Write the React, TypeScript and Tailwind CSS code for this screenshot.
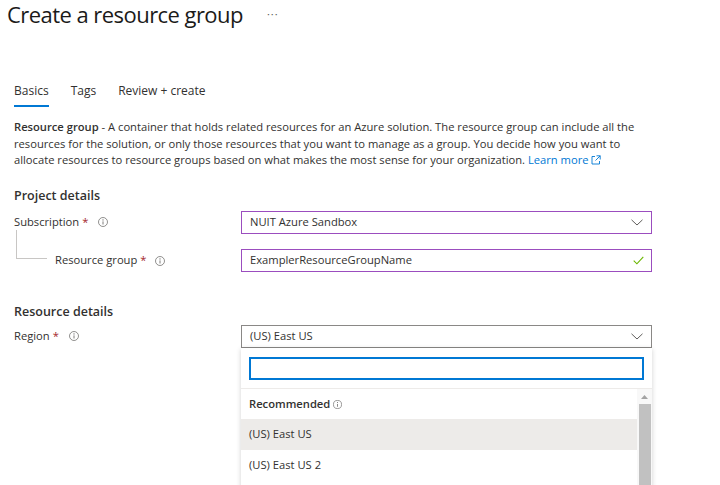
import React from "react";

function InfoIcon({ size = 10 }: { size?: number }) {
  return (
    <svg width={size} height={size} viewBox="0 0 16 16" fill="none" className="shrink-0">
      <circle cx="8" cy="8" r="7.2" stroke="#605e5c" strokeWidth="1.1" />
      <line x1="8" y1="7" x2="8" y2="12" stroke="#605e5c" strokeWidth="1.3" />
      <circle cx="8" cy="4.6" r="0.9" fill="#605e5c" />
    </svg>
  );
}

function Chevron() {
  return (
    <svg width="12" height="7" viewBox="0 0 12 7" fill="none" className="shrink-0">
      <path d="M0.5 0.8 L6 6 L11.5 0.8" stroke="#605e5c" strokeWidth="1" />
    </svg>
  );
}

function Check() {
  return (
    <svg width="11" height="9" viewBox="0 0 11 9" fill="none" className="shrink-0">
      <path d="M0.7 4.6 L3.9 7.8 L10.3 0.8" stroke="#6bb700" strokeWidth="1.1" />
    </svg>
  );
}

function ExternalIcon() {
  return (
    <svg width="10" height="10" viewBox="0 0 10 10" fill="none" className="inline-block ml-[2px] -mt-[3px]">
      <path d="M4 1.5 H1 V9 H8.5 V6" stroke="#0078d4" strokeWidth="0.9" />
      <path d="M5.5 0.8 H9.2 V4.5 M9.2 0.8 L4.5 5.5" stroke="#0078d4" strokeWidth="0.9" />
    </svg>
  );
}

function Req() {
  return <span className="text-[#a4262c] ml-[3px]">*</span>;
}

export default function App() {
  return (
    <div className="w-[720px] h-[485px] overflow-hidden bg-white font-['Open_Sans',sans-serif] text-[#323130] flex flex-col">
      {/* Title */}
      <div className="h-[27px] flex items-center pl-[7px] shrink-0">
        <h1 className="text-[22px] font-medium tracking-[-0.55px] text-[#1b1a19] leading-none whitespace-nowrap">
          Create a resource group
        </h1>
        <span className="ml-[24px] text-[11px] text-[#605e5c] tracking-[1px] leading-none">···</span>
      </div>

      {/* Tabs */}
      <div className="mt-[50px] flex pl-[14px] gap-[22px] shrink-0">
        <div className="flex flex-col">
          <div className="h-[28px] flex items-center text-[12px] text-[#323130]">Basics</div>
          <div className="h-[2px] bg-[#0078d4]" />
        </div>
        <div className="flex flex-col">
          <div className="h-[28px] flex items-center text-[12px] text-[#323130]">Tags</div>
          <div className="h-[2px]" />
        </div>
        <div className="flex flex-col">
          <div className="h-[28px] flex items-center text-[12px] text-[#323130]">Review + create</div>
          <div className="h-[2px]" />
        </div>
      </div>

      {/* Description */}
      <p className="mt-[12px] pl-[14px] text-[11.2px] leading-[16.5px] whitespace-nowrap shrink-0">
        <span className="font-semibold">Resource group</span> - A container that holds related resources for an Azure
        solution. The resource group can include all the
        <br />
        resources for the solution, or only those resources that you want to manage as a group. You decide how you
        want to
        <br />
        allocate resources to resource groups based on what makes the most sense for your organization.{" "}
        <span className="text-[#0078d4]">
          Learn more
          <ExternalIcon />
        </span>
      </p>

      {/* Project details */}
      <div className="mt-[18px] h-[20px] flex items-center pl-[14px] text-[12.5px] font-semibold shrink-0">
        Project details
      </div>

      {/* Subscription */}
      <div className="mt-[4.5px] h-[23px] flex items-center shrink-0">
        <div className="w-[241px] pl-[14px] flex items-center text-[11.2px]">
          <span>Subscription</span>
          <Req />
          <span className="ml-[10px] flex items-center">
            <InfoIcon />
          </span>
        </div>
        <div className="w-[411px] h-[23px] border border-[#9b4dbf] pl-[8px] pr-[8px] flex items-center justify-between text-[11.2px]">
          <span>NUIT Azure Sandbox</span>
          <Chevron />
        </div>
      </div>

      {/* Resource group */}
      <div className="mt-[15px] h-[23px] flex items-center shrink-0">
        <div className="w-[241px] h-[23px] pl-[16px] flex items-center text-[11.2px]">
          <div className="self-start -mt-[19px] w-[31px] h-[29px] border-l border-b border-[#c8c6c4] shrink-0" />
          <span className="ml-[8px]">Resource group</span>
          <Req />
          <span className="ml-[9px] flex items-center">
            <InfoIcon />
          </span>
        </div>
        <div className="w-[411px] h-[23px] border border-[#9b4dbf] pl-[8px] pr-[7px] flex items-center justify-between text-[11.2px]">
          <span>ExamplerResourceGroupName</span>
          <Check />
        </div>
      </div>

      {/* Resource details */}
      <div className="mt-[30.5px] h-[20px] flex items-center pl-[14px] text-[12.5px] font-semibold shrink-0">
        Resource details
      </div>

      {/* Region */}
      <div className="mt-[2.5px] h-[23px] flex items-center shrink-0">
        <div className="w-[241px] pl-[14px] flex items-center text-[11.2px]">
          <span>Region</span>
          <Req />
          <span className="ml-[10px] flex items-center">
            <InfoIcon />
          </span>
        </div>
        <div className="w-[411px] h-[23px] border border-[#8a8886] pl-[8px] pr-[8px] flex items-center justify-between text-[11.2px]">
          <span>(US) East US</span>
          <Chevron />
        </div>
      </div>

      {/* Dropdown panel */}
      <div className="ml-[241px] w-[411px] bg-white shadow-[0_1px_5px_rgba(0,0,0,0.18)] flex flex-col shrink-0">
        <div className="pt-[9px] pb-[8px] px-[8px]">
          <div className="h-[23px] border-2 border-[#0078d4] bg-white" />
        </div>
        <div className="border-t border-[#edebe9] flex">
          <div className="flex-1 flex flex-col text-[11.2px]">
            <div className="h-[30px] flex items-center pl-[8px] font-semibold">
              <span>Recommended</span>
              <span className="ml-[3px] flex items-center">
                <InfoIcon size={9} />
              </span>
            </div>
            <div className="h-[31px] flex items-center pl-[8px] bg-[#edebe9]">(US) East US</div>
            <div className="h-[31px] flex items-center pl-[8px]">(US) East US 2</div>
            <div className="h-[40px]" />
          </div>
          <div className="w-[15px] bg-[#f8f8f8] flex flex-col items-center">
            <div className="h-[15px] flex items-center justify-center">
              <svg width="7" height="4" viewBox="0 0 7 4">
                <path d="M0 4 L3.5 0 L7 4 Z" fill="#a3a3a3" />
              </svg>
            </div>
            <div className="w-[12px] flex-1 bg-[#c1c1c1]" />
          </div>
        </div>
      </div>
    </div>
  );
}
